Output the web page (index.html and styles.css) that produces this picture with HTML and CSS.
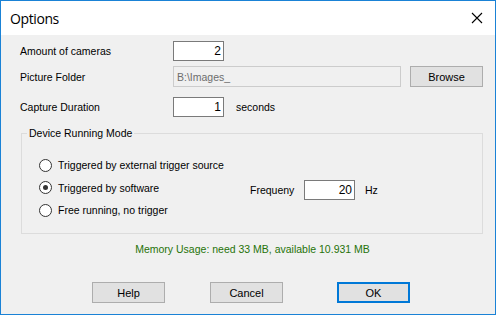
FILE: index.html
```html
<!DOCTYPE html>
<html>
<head>
<meta charset="utf-8">
<link rel="stylesheet" href="styles.css">
</head>
<body>
<div class="window">
  <div class="titlebar">
    <span class="title">Options</span>
    <svg class="close" width="12" height="12" viewBox="0 0 12 12"><path d="M1 1 L11 11 M11 1 L1 11" stroke="#000" stroke-width="1.1" fill="none"/></svg>
  </div>
  <div class="content">
    <div class="row r1">
      <span class="label">Amount of cameras</span>
      <span class="box num">2</span>
    </div>
    <div class="row r2">
      <span class="label">Picture Folder</span>
      <span class="box path">B:\Images_</span>
      <span class="btn browse">Browse</span>
    </div>
    <div class="row r3">
      <span class="label">Capture Duration</span>
      <span class="box num">1</span>
      <span class="unit">seconds</span>
    </div>
    <fieldset class="group">
      <legend>Device Running Mode</legend>
      <div class="mode">
        <div class="radio m1"><span class="circle"></span>Triggered by external trigger source</div>
        <div class="radio m2"><span class="circle checked"></span>Triggered by software</div>
        <div class="radio m3"><span class="circle"></span>Free running, no trigger</div>
        <div class="freq">
          <span class="flabel">Frequeny</span>
          <span class="box num">20</span>
          <span class="hz">Hz</span>
        </div>
      </div>
    </fieldset>
    <div class="memory">Memory Usage: need 33 MB, available 10.931 MB</div>
    <div class="buttons">
      <span class="btn help">Help</span>
      <span class="btn cancel">Cancel</span>
      <span class="btn ok">OK</span>
    </div>
  </div>
</div>
</body>
</html>
```
FILE: styles.css
```css
html, body {
  margin: 0;
  padding: 0;
  background: #f0f0f0;
}
.window {
  width: 496px;
  height: 315px;
  box-sizing: border-box;
  border: 1px solid #1a82d6;
  background: #f0f0f0;
  font-family: "Liberation Sans", Arial, sans-serif;
  font-size: 10.5px;
  color: #000;
  overflow: hidden;
}
.titlebar {
  height: 34px;
  background: #fff;
  display: flex;
  align-items: center;
  justify-content: space-between;
  padding: 0 12px 0 9px;
}
.title {
  font-family: "Open Sans", "Noto Sans", sans-serif;
  font-size: 14px;
  letter-spacing: -0.4px;
  color: #000;
  margin-top: 1px;
}
.close {
  display: block;
}
.content {
  padding: 6px 12px 0 19px;
}
.row {
  display: flex;
  align-items: center;
}
.r1 { height: 20px; }
.r2 { height: 21px; margin-top: 5px; }
.r3 { height: 20px; margin-top: 10px; }
.label {
  width: 153px;
  flex: none;
}
.box {
  box-sizing: border-box;
  height: 20px;
  background: #fff;
  border: 1px solid #7a7a7a;
  display: flex;
  align-items: center;
}
.num {
  width: 51px;
  justify-content: flex-end;
  padding-right: 2px;
  font-size: 12px;
}
.path {
  width: 228px;
  height: 21px;
  background: #f0f0f0;
  border-color: #cccccc;
  color: #6d6d6d;
  padding-left: 3px;
}
.btn {
  box-sizing: border-box;
  width: 73px;
  height: 21px;
  background: #e1e1e1;
  border: 1px solid #adadad;
  display: flex;
  align-items: center;
  justify-content: center;
  font-size: 11px;
}
.browse { margin-left: 9px; }
.unit { margin-left: 12px; }
.group {
  margin: 9px 0 0 1px;
  padding: 0 0 12px 0;
  border: 1px solid #dcdcdc;
  min-width: 0;
}
.group legend {
  margin-left: 5px;
  padding: 0 2px;
  line-height: 14px;
  font-size: 10.5px;
}
.mode {
  margin: 14px 0 0 17px;
  display: grid;
  grid-template-columns: 211px auto;
  grid-template-rows: 22px 23px 22px;
}
.radio {
  display: flex;
  align-items: center;
  grid-column: 1;
}
.m1 { grid-row: 1; }
.m2 { grid-row: 2; }
.m3 { grid-row: 3; }
.circle {
  box-sizing: border-box;
  width: 13px;
  height: 13px;
  border: 1px solid #333;
  border-radius: 50%;
  background: #fff;
  margin-right: 6px;
  display: flex;
  align-items: center;
  justify-content: center;
  flex: none;
}
.circle.checked::after {
  content: "";
  width: 5px;
  height: 5px;
  border-radius: 50%;
  background: #333;
}
.freq {
  grid-column: 2;
  grid-row: 2;
  display: flex;
  align-items: center;
  margin-top: 4px;
}
.flabel { width: 54px; }
.hz { margin-left: 10px; }
.memory {
  margin-top: 8px;
  line-height: 14px;
  text-align: center;
  color: #267308;
  padding-left: 2px;
}
.buttons {
  display: flex;
  margin-top: 26px;
}
.help { margin-left: 72px; }
.cancel { margin-left: 45px; }
.ok {
  margin-left: 54px;
  border: 2px solid #0078d7;
}
```
